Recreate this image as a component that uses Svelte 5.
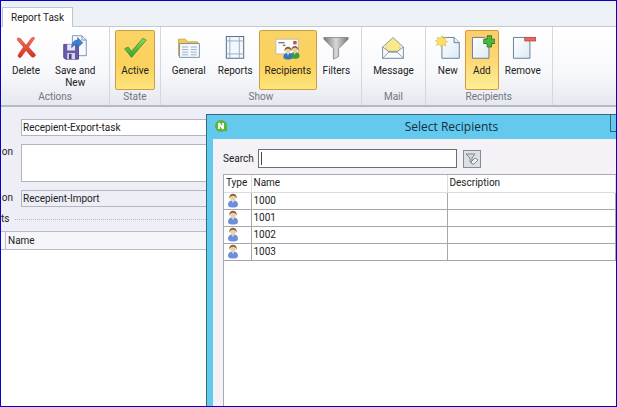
<script lang="ts">
  type Command = { label: string; icon: string; active?: boolean; hot?: boolean };
  type Group = { title: string; commands: Command[] };

  const groups: Group[] = [
    {
      title: "Actions",
      commands: [
        { label: "Delete", icon: "delete" },
        { label: "Save and New", icon: "save" },
      ],
    },
    { title: "State", commands: [{ label: "Active", icon: "check", active: true }] },
    {
      title: "Show",
      commands: [
        { label: "General", icon: "general" },
        { label: "Reports", icon: "reports" },
        { label: "Recipients", icon: "recipients", active: true },
        { label: "Filters", icon: "filter" },
      ],
    },
    { title: "Mail", commands: [{ label: "Message", icon: "mail" }] },
    {
      title: "Recipients",
      commands: [
        { label: "New", icon: "new" },
        { label: "Add", icon: "add", hot: true },
        { label: "Remove", icon: "remove" },
      ],
    },
  ];

  const recipients = ["1000", "1001", "1002", "1003"];

  let taskName = $state("Recepient-Export-task");
  let description = $state("");
  let connection = $state("Recepient-Import");
  let search = $state("");
</script>

{#snippet page()}
  <path d="M4 4h14l5 5v19H4z" fill="url(#paper)" stroke="#55718f" />
{/snippet}

{#snippet person(color: string)}
  <path d="M1 14c-1-4 1-6 5-6s6 2 5 6c-2 2-8 2-10 0z" fill={color} />
  <path d="M5 8l1 3 1-3z" fill="#fff" />
  <circle cx="6" cy="5" r="3" fill="#f1cf9a" />
  <path d="M2 6c-1-7 9-7 8 0-1-2-2-3-4-3s-3 1-4 3z" fill="#866246" />
{/snippet}

{#snippet icon(name: string)}
  <svg class="icon" viewBox="0 0 30 30" aria-hidden="true">
    {#if name === "delete"}
      <path
        d="M5 5c2-1 4 0 5 2l5 6 6-8c2-2 4-1 4 0l-7 10 8 9c0 2-3 4-5 2l-6-7-6 8c-2 1-4-1-3-3l6-9-7-8z"
        fill="url(#red)"
        stroke="#c93a2a"
        stroke-width=".6"
      />
    {:else if name === "save"}
      <path d="M12 2h11l5 5v18H12z" fill="#f7fafe" stroke="#7189a8" />
      <path d="M23 2v5h5" fill="none" stroke="#7189a8" />
      <path d="M2 12h17v17H4l-2-2z" fill="#6b5aa8" stroke="#4d4088" />
      <path d="M6 12h9v7H6z" fill="#e9e7f5" />
      <path d="M6 22h9v7H6z" fill="#d9d6e9" />
      <path d="M8 23h3v6H8z" fill="#4d4088" />
      <path d="M11 16c0-6 3-9 7-9V4l6 6-6 6v-4c-3 0-4 1-7 4z" fill="#3e7fd0" stroke="#2d5fa8" stroke-width=".6" />
    {:else if name === "check"}
      <path d="M3 17l4-2 4 5L24 5l4 2-17 20z" fill="url(#green)" stroke="#2c8a22" stroke-width=".8" />
    {:else if name === "general"}
      <path d="M3 25V6h8l2 3h12v16z" fill="#f6cd4a" stroke="#c9a13a" />
      <path d="M4 11h23v16H4z" fill="#f4f8fc" stroke="#6d87a3" />
      <path d="M7 15h7M7 18h7M7 21h7M7 24h7M17 15h7M17 18h7M17 21h7M17 24h7" stroke="#8fa5bb" />
    {:else if name === "reports"}
      <path d="M5 3h20v25H5z" fill="#f3f7fb" stroke="#55718f" stroke-width="1.200" />
      <path d="M9 3v25M20 3v25M5 8h20M5 23h20" stroke="#8fa5bb" />
    {:else if name === "recipients"}
      <path d="M1 6h26v17H1z" fill="#fdfdfe" stroke="#b3b7bd" />
      <path d="M4 10h7M9 13h3" stroke="#445" stroke-width="1.200" />
      <path d="M21 8h4v4h-4z" fill="#c5544a" />
      <g transform="translate(17 13)">{@render person("#459b3c")}</g>
      <g transform="translate(9 14)">{@render person("#3977bd")}</g>
    {:else if name === "filter"}
      <path d="M1 4h28v2L18 17v9l-6 3V17L1 6z" fill="url(#steel)" stroke="#777" stroke-width=".8" />
    {:else if name === "mail"}
      <path d="M3 15L15 4l12 11v13H3z" fill="#e9eff5" stroke="#7c8fa3" />
      <path d="M7 18v-6l8-7 8 7v6l-8 4z" fill="#f8e98c" stroke="#d7bf5c" stroke-width=".6" />
      <path d="M3 15l8 6h8l8-6v13H3z" fill="#f8fafc" stroke="#7c8fa3" />
      <path d="M3 28l8-8h8l8 8" fill="none" stroke="#7c8fa3" />
    {:else if name === "new"}
      <path d="M8 4h14l6 6v18H8z" fill="url(#paper)" stroke="#55718f" />
      <path d="M22 4v6h6" fill="#e8f1f8" stroke="#55718f" />
      <path
        d="M8 2l1.500 3 3-1-1 3 3 2-3 1 1 4-3.500-2-2 3-1.500-3-4 1 2-3-3-2 3-1-1-3 4 1z"
        fill="#fbe36a"
        stroke="#dcb53a"
        stroke-width=".7"
      />
    {:else if name === "add"}
      {@render page()}
      <path d="M21 2h5v4h4v5h-4v4h-5v-4h-4V6h4z" fill="#4fb53e" stroke="#26791d" />
    {:else if name === "remove"}
      {@render page()}
      <path d="M17 4h13v4H17z" fill="#e8685c" stroke="#c43f35" />
    {/if}
  </svg>
{/snippet}

<div class="window">
  <svg class="defs" aria-hidden="true">
    <defs>
      <linearGradient id="paper" x2="1" y2="1">
        <stop stop-color="#fff" />
        <stop offset="1" stop-color="#dce9f5" />
      </linearGradient>
      <linearGradient id="red" x2="0" y2="1">
        <stop stop-color="#f0705c" />
        <stop offset="1" stop-color="#d6301c" />
      </linearGradient>
      <linearGradient id="green" x2="0" y2="1">
        <stop stop-color="#8ddb62" />
        <stop offset="1" stop-color="#35a32c" />
      </linearGradient>
      <linearGradient id="steel">
        <stop stop-color="#777" />
        <stop offset=".5" stop-color="#d8d8d8" />
        <stop offset="1" stop-color="#777" />
      </linearGradient>
    </defs>
  </svg>

  <nav class="tabs">
    <button class="tab">Report Task</button>
  </nav>

  <div class="ribbon">
    {#each groups as group}
      <section class="group">
        <div class="commands">
          {#each group.commands as command}
            <button class="command" class:active={command.active} class:hot={command.hot}>
              {@render icon(command.icon)}
              <span>{command.label}</span>
            </button>
          {/each}
        </div>
        <h2>{group.title}</h2>
      </section>
    {/each}
  </div>

  <form class="details">
    <input class="field" aria-label="Name" bind:value={taskName} />
    <label for="description">on</label>
    <textarea id="description" class="field" bind:value={description}></textarea>
    <label for="connection">on</label>
    <input id="connection" class="field readonly" bind:value={connection} readonly />
  </form>

  <div class="divider"><span>ts</span></div>

  <div class="list">
    <table>
      <thead>
        <tr><th class="narrow"></th><th>Name</th></tr>
      </thead>
    </table>
  </div>

  <div class="dialog" role="dialog" aria-labelledby="dialog-title">
    <header class="titlebar">
      <svg class="logo" viewBox="0 0 14 14" aria-hidden="true">
        <circle cx="7" cy="7" r="6" fill="#5cb531" />
        <path d="M9 10l4 3V8z" fill="#5cb531" />
        <path d="M5 10V4l4 6V4" fill="none" stroke="#fff" stroke-width="1.800" stroke-linejoin="bevel" />
      </svg>
      <h1 id="dialog-title">Select Recipients</h1>
      <button class="caption" aria-label="Minimize"></button>
    </header>
    <div class="content">
      <div class="search">
        <label for="search">Search</label>
        <input id="search" bind:value={search} />
        <button class="clear" aria-label="Clear filter">
          <svg viewBox="0 0 14 14" aria-hidden="true">
            <path d="M1 2h9L7 6v5L5 10V6z" fill="#d2d8dc" stroke="#7c878e" />
            <path d="M6 10l4-4 3 2-4 4H7z" fill="#f4f7f9" stroke="#7c878e" />
          </svg>
        </button>
      </div>
      <div class="results">
        <table>
          <thead>
            <tr><th class="type">Type</th><th class="name">Name</th><th>Description</th></tr>
          </thead>
          <tbody>
            {#each recipients as recipient}
              <tr>
                <td>
                  <svg class="user" viewBox="0 0 12 16" aria-label="User">
                    {@render person("#6c8fdc")}
                  </svg>
                </td>
                <td>{recipient}</td>
                <td></td>
              </tr>
            {/each}
          </tbody>
        </table>
      </div>
    </div>
  </div>
</div>

<style>
  :global(body) {
    margin: 0;
  }

  .window {
    position: relative;
    display: flex;
    flex-direction: column;
    box-sizing: border-box;
    min-height: 100vh;
    overflow: hidden;
    border: 1px solid #0a00c8;
    background: #eeeef7;
    color: #222;
    font: 10px/12px Roboto, "Open Sans", sans-serif;
  }

  button,
  input,
  textarea {
    box-sizing: border-box;
    margin: 0;
    color: inherit;
    font: inherit;
  }

  h1,
  h2 {
    margin: 0;
    font-weight: 400;
  }

  .defs {
    position: absolute;
    width: 0;
    height: 0;
  }

  .tabs {
    display: flex;
    padding: 6px 1px 0;
    border-bottom: 1px solid #c3cad4;
    background: linear-gradient(#eaf1f6, #edf1f5);
  }

  .tab {
    height: 20px;
    margin-bottom: -1px;
    padding: 0 8px;
    border: 1px solid #bcc4cf;
    border-bottom: 0;
    background: #fff;
  }

  .ribbon {
    display: flex;
    border-bottom: 2px solid #b6bac5;
    background: linear-gradient(#fff 0%, #f7f8fb 60%, #e5e8f0 100%);
  }

  .group {
    display: flex;
    flex-direction: column;
    padding: 3px 5px 1px;
    border-right: 1px solid #d3d7e0;
  }

  .commands {
    display: flex;
    justify-content: center;
  }

  .command {
    display: flex;
    flex-direction: column;
    align-items: center;
    height: 60px;
    padding: 3px 5px 0;
    border: 1px solid transparent;
    border-radius: 2px;
    background: none;
  }

  .command span {
    max-width: 46px;
    margin-top: 5px;
  }

  .active {
    border-color: #c7a14a;
    background: linear-gradient(#fbd365, #fbd25c 60%, #fde57c);
  }

  .hot {
    border-color: #d39a3c;
    background: linear-gradient(#fbcd6a, #fdd873 50%, #fdee97);
  }

  .icon {
    flex: none;
    width: 26px;
    height: 26px;
    margin: 0 -2px;
  }

  .group h2 {
    color: #72767f;
    font-size: 10px;
    line-height: 14px;
    text-align: center;
  }

  .details {
    display: grid;
    grid-template-columns: 12px 1fr;
    gap: 8px;
    padding-top: 12px;
  }

  .details label {
    padding-top: 2px;
    text-align: right;
  }

  .field {
    width: 100%;
    height: 17px;
    padding: 0 1px;
    border: 1px solid #b3b6c0;
    background: #fff;
    resize: none;
  }

  .details > .field:first-child {
    grid-column: 2;
  }

  textarea.field {
    height: 38px;
  }

  .field.readonly {
    background: #eeeef7;
  }

  .divider {
    display: flex;
    align-items: center;
    gap: 6px;
    padding: 6px 0;
  }

  .divider::after {
    flex: 1;
    border-top: 1px dotted #b8bac6;
    content: "";
  }

  .list {
    flex: 1;
    background: #fff;
  }

  table {
    width: 100%;
    border-collapse: collapse;
    table-layout: fixed;
  }

  th {
    font-weight: 400;
    text-align: left;
  }

  .list th {
    height: 17px;
    padding: 0 2px;
    border: 1px solid #b9bcc6;
    border-left: 0;
    background: #f6f6fa;
  }

  .list .narrow {
    width: 0;
  }

  .dialog {
    position: absolute;
    top: 113px;
    right: 0;
    bottom: 0;
    left: 205px;
    display: flex;
    flex-direction: column;
    box-sizing: border-box;
    padding-left: 6px;
    border: 1px solid #36697c;
    border-width: 1px 0 0 1px;
    background: #64c9ef;
  }

  .titlebar {
    display: flex;
    height: 24px;
  }

  .logo {
    width: 14px;
    height: 14px;
    margin: 4px 1px;
  }

  .titlebar h1 {
    flex: 1;
    padding-left: 64px;
    color: #12303c;
    font-family: "Open Sans", sans-serif;
    font-size: 12px;
    line-height: 24px;
    text-align: center;
  }

  .caption {
    width: 6px;
    height: 17px;
    padding: 0;
    border: 1px solid #2f6377;
    border-width: 0 0 1px 1px;
    background: none;
  }

  .content {
    display: flex;
    flex: 1;
    flex-direction: column;
    padding: 10px 0 0 10px;
    background: #f5f2f7;
  }

  .search {
    display: flex;
    align-items: center;
    gap: 6px;
    margin-bottom: 6px;
  }

  .search label {
    width: 29px;
  }

  /* the insertion bar is painted so it stays visible without focus */
  .search input {
    width: 199px;
    height: 19px;
    padding: 0 3px;
    border: 1px solid #6d6d75;
    outline: 0;
    background: #fff linear-gradient(#444, #444) 2px center / 1px 13px no-repeat;
  }

  .clear {
    width: 18px;
    height: 18px;
    padding: 1px;
    border: 1px solid #858b92;
    background: #dcdfe4;
  }

  .clear svg {
    display: block;
    width: 14px;
    height: 14px;
  }

  .results {
    flex: 1;
    border: 1px solid #a9a9b0;
    border-width: 1px 0 0 1px;
    background: #fff;
  }

  .results th,
  .results td {
    box-sizing: border-box;
    height: 17px;
    padding: 0 2px;
    border: 1px solid #a6a6ac;
    border-width: 0 1px 1px 0;
  }

  .results th {
    border-color: #dcdce0;
  }

  .results .type {
    width: 27px;
  }

  .results .name {
    width: 196px;
  }

  .user {
    display: block;
    width: 12px;
    height: 15px;
    margin-left: 1px;
  }
</style>
